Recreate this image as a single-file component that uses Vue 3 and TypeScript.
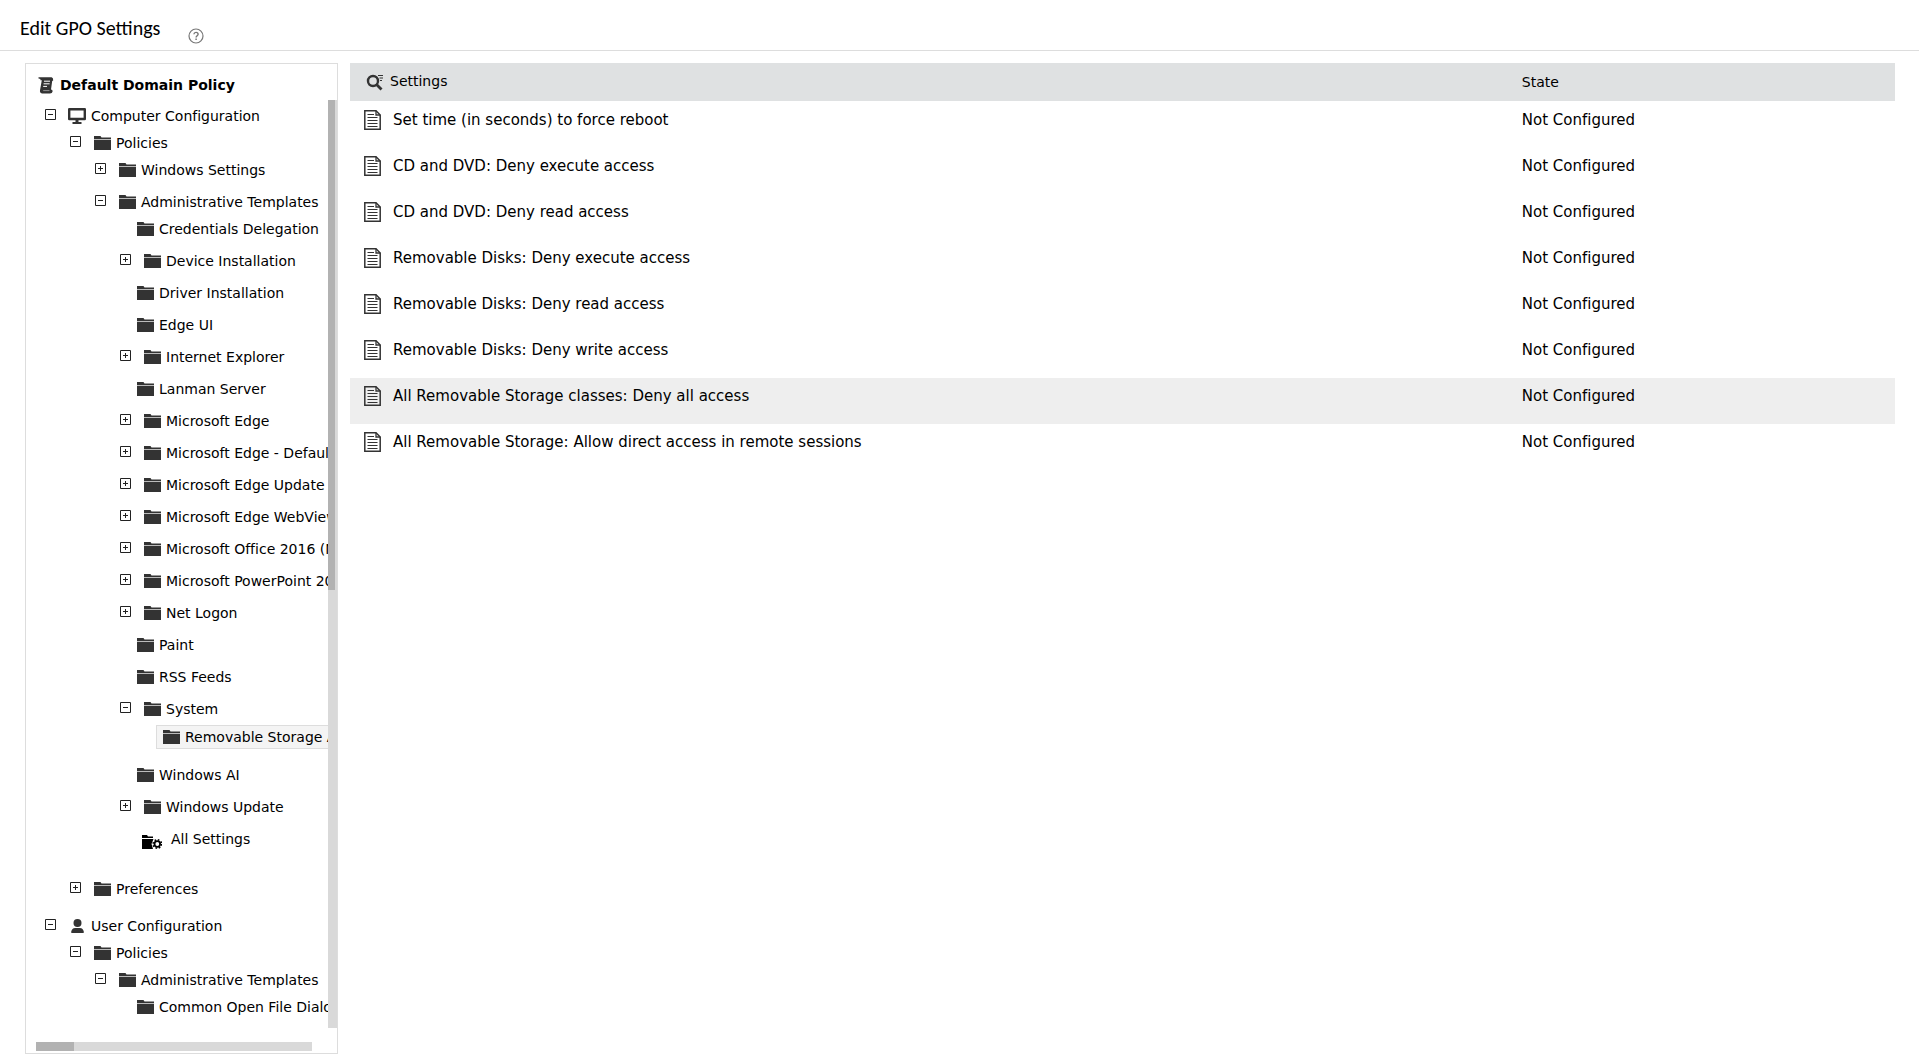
<script setup lang="ts">
import { ref } from 'vue'

type IconName = 'folder' | 'computer' | 'user' | 'settings'

interface TreeRow {
  label: string
  level: number
  icon?: IconName
  toggle?: 'open' | 'closed'
  space?: 'small' | 'medium' | 'large'
}

interface Setting {
  name: string
  state: string
}

const rows: TreeRow[] = [
  { label: 'Computer Configuration', level: 0, icon: 'computer', toggle: 'open' },
  { label: 'Policies', level: 1, toggle: 'open' },
  { label: 'Windows Settings', level: 2, toggle: 'closed', space: 'small' },
  { label: 'Administrative Templates', level: 2, toggle: 'open' },
  { label: 'Credentials Delegation', level: 3, space: 'small' },
  { label: 'Device Installation', level: 3, toggle: 'closed', space: 'small' },
  { label: 'Driver Installation', level: 3, space: 'small' },
  { label: 'Edge UI', level: 3, space: 'small' },
  { label: 'Internet Explorer', level: 3, toggle: 'closed', space: 'small' },
  { label: 'Lanman Server', level: 3, space: 'small' },
  { label: 'Microsoft Edge', level: 3, toggle: 'closed', space: 'small' },
  { label: 'Microsoft Edge - Default', level: 3, toggle: 'closed', space: 'small' },
  { label: 'Microsoft Edge Update', level: 3, toggle: 'closed', space: 'small' },
  { label: 'Microsoft Edge WebView', level: 3, toggle: 'closed', space: 'small' },
  { label: 'Microsoft Office 2016 (M', level: 3, toggle: 'closed', space: 'small' },
  { label: 'Microsoft PowerPoint 20', level: 3, toggle: 'closed', space: 'small' },
  { label: 'Net Logon', level: 3, toggle: 'closed', space: 'small' },
  { label: 'Paint', level: 3, space: 'small' },
  { label: 'RSS Feeds', level: 3, space: 'small' },
  { label: 'System', level: 3, toggle: 'open' },
  { label: 'Removable Storage Access', level: 4, space: 'medium' },
  { label: 'Windows AI', level: 3, space: 'small' },
  { label: 'Windows Update', level: 3, toggle: 'closed', space: 'small' },
  { label: 'All Settings', level: 3, icon: 'settings', space: 'large' },
  { label: 'Preferences', level: 1, toggle: 'closed', space: 'medium' },
  { label: 'User Configuration', level: 0, icon: 'user', toggle: 'open' },
  { label: 'Policies', level: 1, toggle: 'open' },
  { label: 'Administrative Templates', level: 2, toggle: 'open' },
  { label: 'Common Open File Dialog', level: 3 },
]

const selected = ref('Removable Storage Access')

const notConfigured = 'Not Configured'
const settings: Setting[] = [
  'Set time (in seconds) to force reboot',
  'CD and DVD: Deny execute access',
  'CD and DVD: Deny read access',
  'Removable Disks: Deny execute access',
  'Removable Disks: Deny read access',
  'Removable Disks: Deny write access',
  'All Removable Storage classes: Deny all access',
  'All Removable Storage: Allow direct access in remote sessions',
].map((name) => ({ name, state: notConfigured }))

const activeSetting = ref(6)
</script>

<template>
  <div class="page">
    <header class="page-header">
      <h1>Edit GPO Settings</h1>
      <button class="help" type="button" aria-label="Help">
        <svg width="16" height="16" viewBox="0 0 16 16" fill="none" stroke="#777">
          <circle cx="8" cy="8" r="7" stroke-width="1.2" />
          <path d="M5.9 6.3c.1-1.2.9-1.9 2.1-1.9s2.1.7 2.1 1.8c0 1.4-2 1.6-2 3.2" stroke-width="1.4" />
          <path d="M8.1 10.5v1.5" stroke-width="1.5" />
        </svg>
      </button>
    </header>

    <main class="content">
      <nav class="tree-panel" aria-label="Policy tree">
        <h2 class="tree-title">
          <svg width="16" height="18" viewBox="0 0 16 18">
            <path d="M.5 1.2H13.6Q15.4 1.6 15.2 4.6L14.2 5L13 13.4Q14.8 13.6 14.6 15.4Q14.2 17.2 12 17.4H4Q1.6 17 2 14.2L3.8 4.2H2.4V3L.5 2.4Z" fill="#333" />
            <path d="M6 5.2H12M5.6 7.8H11.6M5.2 10.4H9" stroke="#fff" stroke-width="1" />
            <path d="M5.2 14.6H11.5" stroke="#aaa" stroke-width=".8" />
          </svg>
          Default Domain Policy
        </h2>

        <div class="tree-scroll">
          <ul class="tree">
            <li v-for="(row, i) in rows" :key="i" class="row" :class="[`level-${row.level}`, row.space && `space-${row.space}`]">
              <button v-if="row.toggle" class="toggle" type="button" :aria-expanded="row.toggle === 'open'" :aria-label="row.label">
                <svg width="11" height="11" viewBox="0 0 11 11" fill="none" stroke="#222">
                  <path d="M.5 .5H10.5V10.5H.5ZM3 5.5H8" />
                  <path v-if="row.toggle === 'closed'" d="M5.5 3V8" />
                </svg>
              </button>
              <a
                href="#"
                class="node"
                :class="{ leaf: !row.toggle, selected: row.label === selected, special: row.icon === 'settings' }"
                @click.prevent="selected = row.label"
              >
                <svg v-if="row.icon === 'computer'" class="icon" width="18" height="16" viewBox="0 0 18 16">
                  <path d="M1.2 1.2H16.8V11H1.2Z" fill="none" stroke="#333" stroke-width="2.4" stroke-linejoin="round" />
                  <path d="M7.5 12H10.5V14H13.5V16H4.5V14H7.5Z" fill="#333" />
                </svg>
                <svg v-else-if="row.icon === 'user'" class="icon" width="18" height="14" viewBox="0 0 18 14" fill="#333">
                  <circle cx="9.5" cy="4" r="4" />
                  <path d="M3.3 14V12.6Q3.7 9.3 7.2 9H11.8Q15.3 9.3 15.7 12.6V14Z" />
                </svg>
                <svg v-else-if="row.icon === 'settings'" class="icon low" width="20" height="14" viewBox="0 0 20 14">
                  <path d="M0 0H5L6 1.5H11V3H0ZM0 4H11.5L9.5 9L11 14H0Z" fill="#000" />
                  <circle cx="15.3" cy="9" r="2.8" fill="none" stroke="#000" stroke-width="1.8" />
                  <circle cx="15.3" cy="9" r="4.2" fill="none" stroke="#000" stroke-width="1.6" stroke-dasharray="1.65 1.65" />
                </svg>
                <svg v-else class="icon" width="17" height="14" viewBox="0 0 17 14">
                  <path d="M0 0H6.5L7.5 1.5H17V3H0ZM0 4H17V14H0Z" fill="#333" />
                  <path d="M0 3H17V4H0Z" fill="#bbb" />
                </svg>
                <span>{{ row.label }}</span>
              </a>
            </li>
          </ul>
          <div class="v-track"><div class="v-thumb"></div></div>
        </div>

        <div class="h-track"><div class="h-thumb"></div></div>
      </nav>

      <table class="settings">
        <thead>
          <tr>
            <th scope="col" class="name-col">
              <div class="head-name">
                <svg width="18" height="18" viewBox="0 0 18 18" fill="none" stroke="#333">
                  <circle cx="7" cy="8" r="5" stroke-width="2.4" />
                  <path d="M10.3 11.3L15.5 16.5" stroke-width="2.8" />
                  <path d="M12 2.5H17M13.5 5H17M14 7.5H16" stroke-width="1" />
                </svg>
                <span>Settings</span>
              </div>
            </th>
            <th scope="col" class="state-col">State</th>
          </tr>
        </thead>
        <tbody>
          <tr v-for="(s, i) in settings" :key="s.name" :class="{ active: i === activeSetting }" @click="activeSetting = i">
            <td>
              <div class="cell-name">
                <svg width="17" height="20" viewBox="0 0 17 20" fill="none" stroke="#333">
                  <path d="M.8 .8H12L16.2 5V19.2H.8Z" stroke-width="1.5" />
                  <path d="M12 .8V5H16.2" stroke-width="1.3" />
                  <path d="M3.5 4.5H10M3.5 7.5H13.5M3.5 10.5H13.5M3.5 13.5H13.5M3.5 16.5H13.5" stroke-width="1.1" />
                </svg>
                <span>{{ s.name }}</span>
              </div>
            </td>
            <td class="state-col">{{ s.state }}</td>
          </tr>
        </tbody>
      </table>
    </main>
  </div>
</template>

<style>
body {
  margin: 0;
  background: #fff;
}
</style>

<style scoped>
.page {
  color: #000;
  font-family: "DejaVu Sans", Verdana, sans-serif;
  font-size: 14px;
  font-variant-ligatures: none;
}

.page-header {
  display: flex;
  align-items: center;
  gap: 28px;
  height: 50px;
  padding: 0 20px;
  border-bottom: 1px solid #ddd;
}

h1 {
  margin: 0;
  padding-top: 6px;
  line-height: 20px;
  font-family: Carlito, Lato, sans-serif;
  font-size: 20px;
  font-weight: 500;
  font-variant-ligatures: normal;
}

button {
  display: block;
  padding: 0;
  border: 0;
  background: none;
  cursor: pointer;
}

svg {
  display: block;
  flex: none;
}

.help {
  margin-top: 22px;
}

.content {
  display: flex;
  align-items: flex-start;
  gap: 12px;
  padding: 12px 24px 6px 25px;
}

.tree-panel {
  box-sizing: border-box;
  flex: none;
  width: 313px;
  border: 1px solid #ddd;
}

.tree-title {
  display: flex;
  align-items: center;
  gap: 6px;
  height: 36px;
  margin: 0;
  padding: 6px 0 0 12px;
  box-sizing: border-box;
  font-size: 14px;
  font-weight: 700;
}

.tree-scroll {
  display: flex;
}

.tree {
  flex: 1;
  min-width: 0;
  margin: 0;
  padding: 2px 0 8px 19px;
  list-style: none;
  overflow: hidden;
}

.row {
  display: flex;
  align-items: center;
  gap: 13px;
  height: 27px;
}

.level-0 { gap: 12px; }
.level-1 { padding-left: 25px; }
.level-2 { padding-left: 50px; }
.level-3 { padding-left: 75px; }

.level-4 {
  height: 29px;
  padding-left: 100px;
}

.space-small { margin-bottom: 5px; }
.space-medium { margin-bottom: 10px; }
.space-large { margin-bottom: 23px; }

.toggle {
  margin-bottom: 2px;
}

.node {
  display: flex;
  align-items: center;
  gap: 5px;
  height: 22px;
  color: inherit;
  text-decoration: none;
  white-space: nowrap;
}

.leaf {
  margin-left: 11px;
  padding: 0 6px;
}

.selected {
  border: 1px solid #ddd;
  background: #f4f4f4;
}

.special {
  gap: 9px;
  padding-left: 11px;
}

.low {
  margin-top: 6px;
}

.v-track {
  flex: none;
  width: 9px;
  background: #d9d9d9;
}

.v-thumb {
  width: 7px;
  height: 490px;
  background: #b2b2b2;
}

.h-track {
  height: 9px;
  margin: 14px 25px 2px 10px;
  background: #d9d9d9;
}

.h-thumb {
  width: 38px;
  height: 9px;
  background: #b2b2b2;
}

.settings {
  flex: 1;
  width: 100%;
  border-collapse: separate;
  border-spacing: 0;
  table-layout: fixed;
}

th {
  height: 38px;
  padding: 0;
  border-bottom: 1px solid #fff;
  background: #dfe1e2;
  font-weight: 400;
  text-align: left;
}

.name-col {
  width: 75%;
}

.head-name {
  display: flex;
  align-items: center;
  gap: 6px;
  padding-left: 16px;
}

.head-name span {
  padding-bottom: 3px;
}

td {
  height: 46px;
  padding: 8px 0 0;
  box-sizing: border-box;
  line-height: 20px;
  font-size: 15px;
  vertical-align: top;
}

.cell-name {
  display: flex;
  align-items: center;
  gap: 12px;
  padding-left: 14px;
}

.state-col {
  padding-left: 13px;
}

.active {
  background: #eee;
}
</style>
